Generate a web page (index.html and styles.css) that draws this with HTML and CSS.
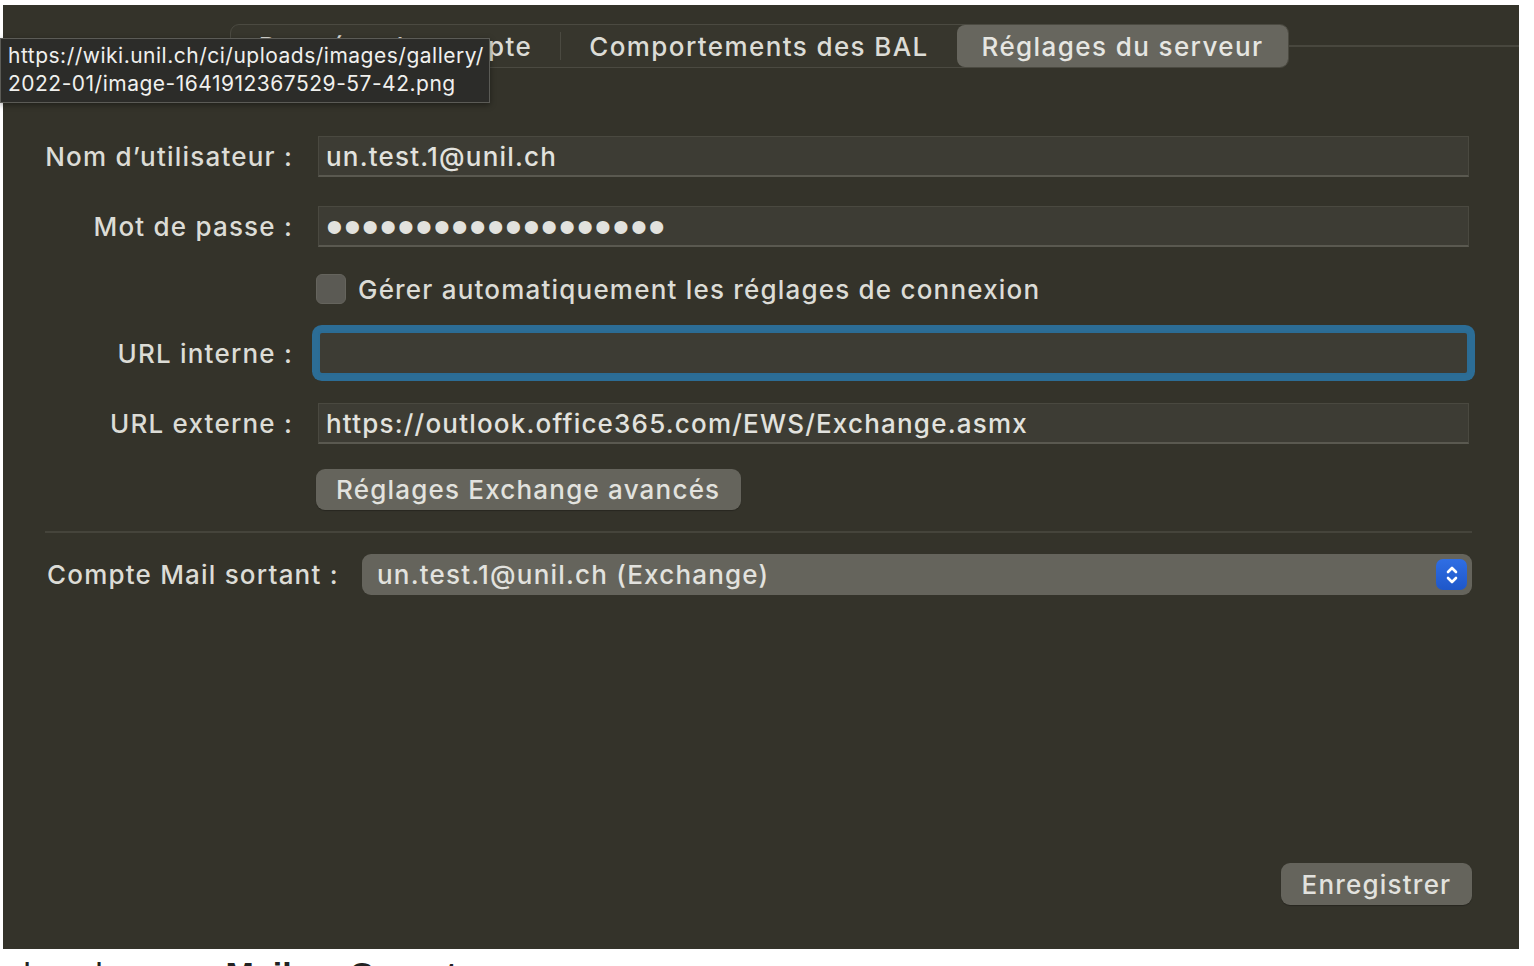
FILE: index.html
```html
<!DOCTYPE html>
<html lang="fr">
<head>
<meta charset="utf-8">
<title>Réglages du serveur</title>
<link rel="stylesheet" href="styles.css">
</head>
<body>
<div class="panel">
  <div class="tabbar">
    <div class="seg">
      <div class="tab tab-first">Données du compte</div>
      <div class="tab tab-mid">Comportements des BAL</div>
      <div class="tab tab-sel">Réglages du serveur</div>
    </div>
    <div class="tabline"></div>
  </div>

  <div class="form">
    <div class="row row-user">
      <div class="label">Nom d’utilisateur :</div>
      <div class="field">un.test.1@unil.ch</div>
    </div>
    <div class="row row-pass">
      <div class="label">Mot de passe :</div>
      <div class="field field-pass">•••••••••••••••••••</div>
    </div>
    <div class="row row-check">
      <div class="label"></div>
      <div class="check-wrap"><span class="checkbox"></span><span class="check-label">Gérer automatiquement les réglages de connexion</span></div>
    </div>
    <div class="row row-int">
      <div class="label">URL interne :</div>
      <div class="field field-focus"></div>
    </div>
    <div class="row row-ext">
      <div class="label">URL externe :</div>
      <div class="field">https://outlook.office365.com/EWS/Exchange.asmx</div>
    </div>
    <div class="row row-btn">
      <div class="label"></div>
      <div class="btn-wrap"><span class="button">Réglages Exchange avancés</span></div>
    </div>
  </div>

  <div class="sep"></div>

  <div class="out-row">
    <div class="out-label">Compte Mail sortant :</div>
    <div class="select">
      <span class="select-text">un.test.1@unil.ch (Exchange)</span>
      <span class="stepper">
        <svg width="14" height="22" viewBox="0 0 14 22" fill="none" stroke="#ffffff" stroke-width="2.6" stroke-linecap="round" stroke-linejoin="round"><path d="M3 8 L7 4 L11 8"/><path d="M3 14 L7 18 L11 14"/></svg>
      </span>
    </div>
  </div>

  <div class="footer">
    <span class="button button-save">Enregistrer</span>
  </div>

  <div class="tooltip">https://wiki.unil.ch/ci/uploads/images/gallery/<br>2022-01/image-1641912367529-57-42.png</div>
</div>
<p class="below">dans le menu <b>Mail</b> &nbsp;&gt;&nbsp; <b>Comptes</b></p>
</body>
</html>
```

FILE: styles.css
```css
html, body {
  margin: 0;
  padding: 0;
  background: #ffffff;
  overflow: hidden;
}

.panel {
  position: relative;
  margin: 5px 0 0 3px;
  width: 1516px;
  height: 944px;
  background: #34332a;
  font-family: Inter, "Liberation Sans", sans-serif;
  font-weight: 500;
  font-size: 26px;
  letter-spacing: 1.2px;
  color: #dcdcd6;
  box-sizing: border-box;
  display: flex;
  flex-direction: column;
}

/* Tabs */
.tabbar {
  display: flex;
  align-items: center;
  margin-top: 19px;
  padding-left: 227px;
  height: 44px;
}
.seg {
  display: flex;
  height: 44px;
  box-sizing: border-box;
  border: 1px solid #4b4a41;
  border-radius: 9px;
  background: #37362d;
}
.tab {
  display: flex;
  align-items: center;
  justify-content: center;
  height: 100%;
  box-sizing: border-box;
  white-space: nowrap;
  letter-spacing: 1.4px;
}
.tab-first { width: 330px; border-right: 1px solid #4b4a41; margin: 7px 0; height: 28px; }
.tab-mid { width: 396px; }
.tab-sel {
  width: 331px;
  background: #67665e;
  border-radius: 8px;
  color: #e6e6e2;
}
.tabline {
  flex: 1;
  height: 2px;
  background: #48473e;
}

/* Form */
.form {
  display: flex;
  flex-direction: column;
  margin-top: 68px;
}
.row {
  display: flex;
  align-items: center;
}
.label {
  width: 290px;
  margin-right: 25px;
  text-align: right;
  white-space: nowrap;
  flex: none;
}
.field {
  width: 1151px;
  height: 41px;
  box-sizing: border-box;
  background: #3d3c34;
  border: 1px solid #4a4940;
  border-bottom: 2px solid #5a5950;
  padding: 0 7px;
  display: flex;
  align-items: center;
  color: #e2e2de;
  white-space: nowrap;
}
.field-pass {
  font-family: "Liberation Sans", sans-serif;
  font-size: 48px;
  letter-spacing: 1.1px;
  padding-left: 7px;
  padding-top: 2px;
  line-height: 1;
}
.row-pass { margin-top: 29px; }
.row-check { margin-top: 27px; height: 30px; }
.check-wrap {
  display: flex;
  align-items: center;
  gap: 12px;
  white-space: nowrap;
}
.checkbox {
  width: 30px;
  height: 30px;
  border-radius: 6px;
  background: #5b5a54;
  box-sizing: border-box;
  border: 1px solid #65645d;
  flex: none;
  margin-left: -2px;
}
.row-int { margin-top: 27px; }
.field-focus {
  height: 44px;
  border: 2px solid #2b6c95;
  border-radius: 4px;
  box-shadow: 0 0 0 6px #2c6d96;
}
.row-ext { margin-top: 28px; }
.row-btn { margin-top: 25px; }
.btn-wrap { margin-left: -2px; }
.button {
  display: inline-flex;
  align-items: center;
  height: 41px;
  padding: 0 20px;
  background: #65645c;
  border-radius: 9px;
  color: #e2e2de;
  white-space: nowrap;
  box-shadow: 0 1px 1px rgba(0,0,0,0.25);
}
.row-btn .button { width: 425px; box-sizing: border-box; }

.sep {
  margin: 21px 0 0 42px;
  width: 1427px;
  height: 2px;
  background: #45443b;
}

.out-row {
  display: flex;
  align-items: center;
  margin-top: 21px;
  padding-left: 44px;
}
.out-label {
  width: 315px;
  white-space: nowrap;
}
.select {
  width: 1110px;
  height: 41px;
  box-sizing: border-box;
  background: #65645c;
  border-radius: 9px;
  display: flex;
  align-items: center;
  justify-content: space-between;
  padding: 0 5px 0 15px;
  color: #e2e2de;
}
.stepper {
  width: 31px;
  height: 31px;
  border-radius: 7px;
  background: linear-gradient(#2f6ee4, #1f57c9);
  display: flex;
  align-items: center;
  justify-content: center;
}

.footer {
  display: flex;
  justify-content: flex-end;
  margin-top: 268px;
  padding-right: 47px;
}
.button-save {
  width: 191px;
  height: 42px;
  box-sizing: border-box;
  justify-content: center;
  padding: 0;
}

/* Tooltip overlay */
.tooltip {
  position: absolute;
  left: -3px;
  top: 33px;
  width: 490px;
  height: 65px;
  box-sizing: border-box;
  background: #2c2c29;
  border: 1px solid #5b5b56;
  color: #f0f0ee;
  font-family: Inter, "Liberation Sans", sans-serif;
  font-weight: 400;
  font-size: 21px;
  letter-spacing: 0.5px;
  line-height: 28px;
  padding: 3px 0 0 7px;
  white-space: nowrap;
  box-shadow: 0 2px 6px rgba(0,0,0,0.4);
}

.below {
  margin: 0;
  padding: 6px 0 0 12px;
  font-family: "Liberation Sans", Arial, sans-serif;
  font-size: 34px;
  color: #222222;
  white-space: nowrap;
}
```
